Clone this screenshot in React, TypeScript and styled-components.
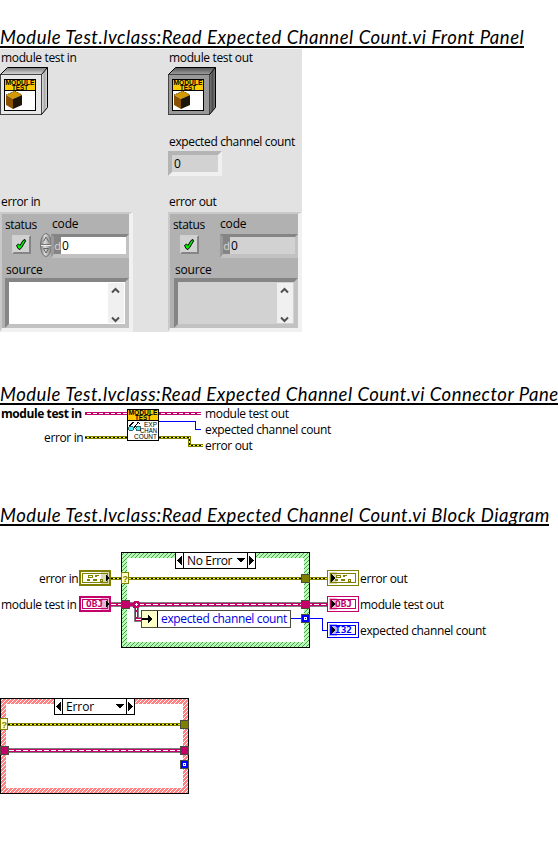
import React from 'react';
import styled, { createGlobalStyle } from 'styled-components';

const Global = createGlobalStyle`
  body { margin: 0; background: #fff; }
  * { box-sizing: border-box; }
`;

const ui = `'Open Sans', 'Noto Sans', sans-serif`;

const Page = styled.main`
  width: 558px;
  height: 844px;
  overflow: hidden;
  display: flex;
  flex-direction: column;
  align-items: flex-start;
  background: #fff;
  color: #000;
`;

const Heading = styled.h1<{ $top: number; $width: number; $spacing: number }>`
  margin: ${p => p.$top}px 0 0;
  width: ${p => p.$width}px;
  height: 22px;
  flex: none;
  overflow: hidden;
  white-space: nowrap;
  border-bottom: 2px solid #000;
  font: italic 400 18.5px/23px Lato, sans-serif;
  letter-spacing: ${p => p.$spacing}px;
`;

const Text = styled.div<{ $bold?: boolean; $spacing?: number }>`
  font: ${p => (p.$bold ? 700 : 400)} 12px/16px ${ui};
  letter-spacing: ${p => p.$spacing ?? -0.35}px;
  white-space: nowrap;
`;

const Panel = styled.section`
  width: 302px;
  height: 283px;
  margin-top: 1px;
  flex: none;
  display: grid;
  grid-template-columns: 168px 134px;
  grid-template-rows: 84px 60px 139px;
  background: #e2e2e2;
`;

const Cell = styled.div`
  display: flex;
  flex-direction: column;
  align-items: flex-start;
  padding-top: 1px;
`;

const Caption = styled(Text)`
  height: 17px;
  padding-left: 1px;
`;

const Numeric = styled.div`
  width: 54px;
  height: 25px;
  padding-left: 2px;
  border: 4px solid;
  border-color: #b4b4b4 #f0f0f0 #f0f0f0 #b4b4b4;
  background: #d2d2d2;
  font: 12px/17px ${ui};
`;

const Cluster = styled.div<{ $live: boolean }>`
  width: ${p => (p.$live ? 133 : 134)}px;
  height: 120px;
  margin-top: 1px;
  border: 4px solid;
  border-color: #c9c9c9 #f1f1f1 #f1f1f1 #c9c9c9;
  border-top-width: 2px;
  border-left-width: 2px;
  background: #b1b1b1;
  display: flex;
  flex-direction: column;
`;

const ClusterRow = styled.div`
  display: flex;
  height: 45px;
`;

const StatusPart = styled.div`
  width: 36px;
  flex: none;
  padding: 3px 0 0 3px;
`;

const StatusLed = styled.div`
  width: 19px;
  height: 19px;
  margin: 2px 0 0 7px;
  border: 2px solid;
  border-color: #d0d0d0 #858585 #858585 #d0d0d0;
  background: #d2d2d2;
  display: flex;
  align-items: center;
  justify-content: center;
`;

const CodePart = styled.div`
  flex: 1;
  padding-top: 2px;
`;

const CodeLabel = styled(Text)`
  padding-left: 14px;
`;

const CodeRow = styled.div`
  display: flex;
  height: 26px;
  align-items: center;
`;

const SpinnerSlot = styled.div<{ $live: boolean }>`
  width: ${p => (p.$live ? 13 : 14)}px;
  height: 24px;
  padding-left: 2px;
  flex: none;
  svg { display: block; }
`;

const CodeField = styled.div<{ $live: boolean }>`
  width: 78px;
  flex: none;
  height: 24px;
  margin-top: 2px;
  border: 3px solid;
  border-color: #858585 #c2c2c2 #c2c2c2 #9a9a9a;
  border-bottom-width: 4px;
  display: flex;
  background: ${p => (p.$live ? '#fff' : '#d2d2d2')};
  font: 12px/18px ${ui};
`;

const Radix = styled.span`
  width: 7px;
  background: #858585;
  color: #d8d8d8;
  text-align: center;
  font-size: 11px;
`;

const Digit = styled.span`
  padding-left: 1px;
`;

const SourcePart = styled.div<{ $live: boolean }>`
  padding-left: ${p => (p.$live ? 3 : 4)}px;
`;

const SourceLabel = styled(Text)`
  padding-left: 1px;
  height: 16px;
  margin-top: 3px;
`;

const SourceBox = styled.div<{ $live: boolean }>`
  width: 124px;
  height: 50px;
  border: 4px solid;
  border-color: #858585 #c2c2c2 #c2c2c2 #858585;
  background: ${p => (p.$live ? '#fff' : '#d2d2d2')};
  display: flex;
  justify-content: flex-end;
  padding: 1px;
`;

const ScrollBar = styled.div`
  width: 16px;
  background: #f0f0f0;
  svg { display: block; }
`;

const Canvas = styled.section<{ $h: number }>`
  position: relative;
  flex: none;
  width: 558px;
  height: ${p => p.$h}px;
`;

const Art = styled.svg`
  position: absolute;
  left: 0;
  top: 0;
`;

const Tag = styled(Text)<{ $x: number; $y: number }>`
  position: absolute;
  left: ${p => p.$x}px;
  top: ${p => p.$y}px;
`;

const FieldTag = styled(Tag)`
  color: #0000e0;
`;

function ModuleBanner() {
  return (
    <>
      <rect x="0.5" y="0.5" width="31" height="31" fill="#fff" stroke="#000" />
      <rect x="1" y="1" width="30" height="10" fill="#ffcb00" />
      <path d="M1 11.5H31" stroke="#000" />
      <g fontFamily="Liberation Sans" fontSize="6.5" fontWeight="700">
        <text x="1.5" y="5.8" textLength="29" lengthAdjust="spacingAndGlyphs">MODULE</text>
        <text x="8" y="11" textLength="16" lengthAdjust="spacingAndGlyphs">TEST</text>
      </g>
    </>
  );
}

function ClassCube({ dark, id }: { dark?: boolean; id: string }) {
  return (
    <svg width="48" height="48" viewBox="0 0 48 48" display="block">
      <defs>
        <linearGradient id={id + 't'} x1="0" y1="0" x2="0" y2="1">
          <stop offset="0" stopColor={dark ? '#505050' : '#777'} />
          <stop offset="1" stopColor={dark ? '#a0a0a0' : '#ddd'} />
        </linearGradient>
        <linearGradient id={id + 's'}>
          <stop offset="0" stopColor={dark ? '#7d7d7d' : '#e8e8e8'} />
          <stop offset="0.5" stopColor={dark ? '#4c4c4c' : '#aaa'} />
          <stop offset="1" stopColor={dark ? '#858585' : '#e0e0e0'} />
        </linearGradient>
      </defs>
      <path d="M0.5 7.5L7.5 0.5H47.5L41.5 7.5Z" fill={`url(#${id}t)`} />
      <path d="M41.5 7.5L47.5 0.5V40.5L41.5 47.5Z" fill={`url(#${id}s)`} />
      <rect x="0.5" y="7.5" width="41" height="40" fill={dark ? '#999' : '#e8e8e8'} stroke="#444" />
      <path d="M0.5 7.5L7.5 0.5H47.5V40.5L41.5 47.5M41.5 7.5L47.5 0.5" fill="none" stroke="#000" />
      <g transform="translate(4 12)">
        <ModuleBanner />
        <path d="M2 16L11 12L18 16L9 20Z" fill="#d29a00" />
        <path d="M2 16L9 20V30L2 26Z" fill="#8a5200" />
        <path d="M9 20L18 16V26L9 30Z" fill="#1d1609" />
        <path d="M2 16L11 12L18 16" fill="none" stroke="#4c3200" strokeDasharray="1 1" />
      </g>
    </svg>
  );
}

function ErrorCluster({ live }: { live: boolean }) {
  return (
    <Cluster $live={live}>
      <ClusterRow>
        <StatusPart>
          <Text>status</Text>
          <StatusLed>
            <svg width="13" height="13" viewBox="0 0 13 13">
              <path d="M1.5 7.5L3.5 6L5 7.5L8 2.5L10 1.5L10.5 3L7 9L5 11.5L3 10.5Z" fill="#00ef00" stroke="#000" />
            </svg>
          </StatusLed>
        </StatusPart>
        <CodePart>
          <CodeLabel $spacing={-0.15}>code</CodeLabel>
          <CodeRow>
            <SpinnerSlot $live={live}>
              {live && (
                <svg width="12" height="24" viewBox="0 0 12 24">
                  <defs>
                    <linearGradient id="spin">
                      <stop offset="0" stopColor="#777" />
                      <stop offset="0.4" stopColor="#ddd" />
                      <stop offset="1" stopColor="#777" />
                    </linearGradient>
                  </defs>
                  <ellipse cx="6" cy="12" rx="5.5" ry="11.5" fill="url(#spin)" stroke="#777" />
                  <path d="M1 11.5H11" stroke="#777" />
                  <path d="M1 12.5H11" stroke="#eee" />
                  <path d="M3.5 8.5L6 4L8.5 8.5M3.5 15.5H8.5L6 20Z" fill="none" stroke="#666" />
                </svg>
              )}
            </SpinnerSlot>
            <CodeField $live={live}>
              <Radix>d</Radix>
              <Digit>0</Digit>
            </CodeField>
          </CodeRow>
        </CodePart>
      </ClusterRow>
      <SourcePart $live={live}>
        <SourceLabel $spacing={-0.2}>source</SourceLabel>
        <SourceBox $live={live}>
          <ScrollBar>
            <svg width="16" height="40" viewBox="0 0 16 40">
              <path d="M4 9.5L7.5 6L11 9.5M4 34.5L7.5 38L11 34.5" fill="none" stroke="#505050" strokeWidth="2" />
            </svg>
          </ScrollBar>
        </SourceBox>
      </SourcePart>
    </Cluster>
  );
}

const OLIVE = '#808000';
const PINK = '#c4006a';
const BLUE = '#0000ff';

function ErrorWire({ d }: { d: string }) {
  return (
    <g fill="none">
      <path d={d} stroke={OLIVE} strokeWidth="3" />
      <path d={d} stroke="#ffff00" />
      <path d={d} stroke="#000" strokeDasharray="2 2" />
    </g>
  );
}

function ClassWire({ d }: { d: string }) {
  return (
    <g fill="none">
      <path d={d} stroke="#808080" strokeWidth="5" />
      <path d={d} stroke={PINK} strokeWidth="3" />
      <path d={d} stroke="#fff" strokeDasharray="5 2" />
    </g>
  );
}

type Kind = 'error' | 'class' | 'int';
const kindColor = { error: OLIVE, class: PINK, int: BLUE };

function Tunnel({ x, y, kind }: { x: number; y: number; kind: Kind }) {
  return (
    <g>
      <rect x={x + 0.5} y={y + 0.5} width="8" height="8" fill={kindColor[kind]} stroke="#4b4b3c" />
      {kind === 'int' && <rect x={x + 3.5} y={y + 3.5} width="2" height="2" fill={BLUE} stroke="#fff" />}
    </g>
  );
}

function CaseSelectorPin({ x, y }: { x: number; y: number }) {
  return (
    <g>
      <rect x={x + 0.5} y={y + 0.5} width="7" height="11" fill="#ffffc8" stroke={OLIVE} />
      <text x={x + 1.5} y={y + 9.5} fontFamily="Liberation Sans" fontSize="9" fontWeight="700" fill={OLIVE}>?</text>
    </g>
  );
}

function Terminal({ x, y, kind, source }: { x: number; y: number; kind: Kind; source?: boolean }) {
  const c = kindColor[kind];
  return (
    <g transform={`translate(${x} ${y})`}>
      <rect x={source ? 1 : 0.5} y={source ? 1 : 0.5} width={source ? 30 : 31} height={source ? 14 : 15} fill="#fff" stroke={c} strokeWidth={source ? 2 : 1} />
      <rect x="3.5" y="3.5" width="25" height="9" fill="#fff" stroke={c} />
      {kind === 'error' ? (
        <g fill="none" stroke={c}>
          <path d="M9.5 5.5H13.5V7.5H9.5ZM17 5.5H20M21.5 9.5H23.5V11.5H21.5Z" />
          <path d="M8 10H11M14 10H18M16 6H18" strokeWidth="2" />
        </g>
      ) : (
        <text x={source ? 7 : 8} y="11" textLength="17" lengthAdjust="spacingAndGlyphs" fontFamily="DejaVu Sans Mono" fontWeight="700" fontSize="8.5" fill={c}>
          {kind === 'class' ? 'OBJ' : 'I32'}
        </text>
      )}
      <rect x={source ? 22 : 2} y="2" width="8" height="12" fill={c} opacity="0.3" />
      <path d={source ? 'M27 5L30 8L27 11Z' : 'M4 4L8 8L4 12Z'} fill="#000" />
    </g>
  );
}

function CaseFrame({ x, y, ok }: { x: number; y: number; ok?: boolean }) {
  const id = ok ? 'hatchOk' : 'hatchErr';
  return (
    <g transform={`translate(${x} ${y})`}>
      <defs>
        <pattern id={id} width="4" height="4" patternUnits="userSpaceOnUse">
          <rect width="4" height="4" fill={ok ? '#b4ffb4' : '#ff8080'} />
          {[0, 1, 2, 3].map(i => (
            <rect key={i} x={i} y={3 - i} width="1" height="1" fill={ok ? '#569656' : '#fff'} />
          ))}
        </pattern>
      </defs>
      <rect width="189" height="96" fill="#000" />
      <rect x="1" y="1" width="187" height="94" fill={`url(#${id})`} />
      <rect x="6" y="6" width="177" height="84" fill="#fff" />
      <rect x="54.5" y="0.5" width="80" height="16" fill="#fff" stroke="#000" />
      <path d="M62.5 0V17M126.5 0V17" stroke="#000" />
      <path d="M61 4V13L56 8.5ZM128 4V13L133 8.5ZM116 6H124L120 10.5Z" />
    </g>
  );
}

export default function App() {
  return (
    <Page>
      <Global />
      <Heading $top={26} $width={524} $spacing={0.53}>Module Test.lvclass:Read Expected Channel Count.vi Front Panel</Heading>
      <Panel>
        <Cell>
          <Caption>module test in</Caption>
          <ClassCube id="cin" />
        </Cell>
        <Cell>
          <Caption>module test out</Caption>
          <ClassCube id="cout" dark />
        </Cell>
        <Cell />
        <Cell>
          <Caption>expected channel count</Caption>
          <Numeric>0</Numeric>
        </Cell>
        <Cell>
          <Caption>error in</Caption>
          <ErrorCluster live />
        </Cell>
        <Cell>
          <Caption>error out</Caption>
          <ErrorCluster live={false} />
        </Cell>
      </Panel>

      <Heading $top={51} $width={558} $spacing={0.5}>Module Test.lvclass:Read Expected Channel Count.vi Connector Pane</Heading>
      <Canvas $h={50}>
        <Art width="558" height="50" viewBox="0 405 558 50" shapeRendering="crispEdges">
          <g fill="none">
            <path d="M85 413.5H127M159 413.5H201" stroke={PINK} strokeWidth="3" />
            <path d="M87 413.5H127M161 413.5H201" stroke="#fff" strokeDasharray="4 2" />
            <path d="M159 421.5H195.5V429.5H201" stroke={BLUE} />
          </g>
          <ErrorWire d="M85 437.5H127" />
          <ErrorWire d="M159 437.5H189.5V445.5H203" />
          <g transform="translate(127 409)">
            <ModuleBanner />
            <circle cx="4" cy="19.5" r="2.5" fill="#5ee" stroke="#366" />
            <circle cx="11.5" cy="19.5" r="2.5" fill="#5ee" stroke="#366" />
            <path d="M2.5 17L6 13.5L7.5 14.5M7 19L11 13.5L13 14.5" fill="none" stroke="#000" />
            <g fontFamily="Liberation Sans" fontSize="6.8">
              <text x="17" y="18" textLength="13" lengthAdjust="spacingAndGlyphs">EXP</text>
              <text x="13" y="24" textLength="17" lengthAdjust="spacingAndGlyphs">CHAN</text>
              <text x="7" y="30" textLength="23" lengthAdjust="spacingAndGlyphs">COUNT</text>
            </g>
          </g>
        </Art>
        <Tag $bold $x={1} $y={1} $spacing={-0.42}>module test in</Tag>
        <Tag $x={44} $y={25}>error in</Tag>
        <Tag $x={205} $y={1}>module test out</Tag>
        <Tag $x={205} $y={17}>expected channel count</Tag>
        <Tag $x={205} $y={33}>error out</Tag>
      </Canvas>

      <Heading $top={49} $width={549} $spacing={0.53}>Module Test.lvclass:Read Expected Channel Count.vi Block Diagram</Heading>
      <Canvas $h={318}>
        <Art width="558" height="318" viewBox="0 526 558 318" shapeRendering="crispEdges">
          <CaseFrame x={121} y={552} ok />
          <ErrorWire d="M111 578.5H327" />
          <ClassWire d="M111 604.5H327" />
          <ClassWire d="M136.5 605V619.5H141" />
          <circle cx="136.5" cy="604.5" r="4" fill={PINK} />
          <path d="M135 604.5H138M136.5 603V606" stroke="#fff" />
          <path d="M291 618.5H322.5V630.5H327" fill="none" stroke={BLUE} />
          <rect x="141.5" y="610.5" width="149" height="17" fill="#fff" stroke="#4b4b3c" />
          <rect x="142" y="611" width="15" height="16" fill="#ffffc8" />
          <path d="M157.5 611V627" stroke="#000" />
          <path d="M142 618H148V615L153 619L148 623V620H142Z" />
          <CaseSelectorPin x={121} y={572} />
          <Tunnel x={121} y={600} kind="class" />
          <Tunnel x={301} y={574} kind="error" />
          <Tunnel x={301} y={600} kind="class" />
          <Tunnel x={301} y={614} kind="int" />
          <Terminal x={79} y={570} kind="error" source />
          <Terminal x={79} y={596} kind="class" source />
          <Terminal x={327} y={570} kind="error" />
          <Terminal x={327} y={596} kind="class" />
          <Terminal x={327} y={622} kind="int" />

          <CaseFrame x={0} y={698} />
          <ErrorWire d="M8 724.5H180" />
          <ClassWire d="M9 750.5H180" />
          <CaseSelectorPin x={0} y={718} />
          <Tunnel x={0} y={746} kind="class" />
          <Tunnel x={180} y={720} kind="error" />
          <Tunnel x={180} y={746} kind="class" />
          <Tunnel x={180} y={760} kind="int" />
        </Art>
        <Tag $x={39} $y={45}>error in</Tag>
        <Tag $x={1} $y={71}>module test in</Tag>
        <Tag $x={187} $y={27}>No Error</Tag>
        <FieldTag $x={161} $y={85}>expected channel count</FieldTag>
        <Tag $x={360} $y={45}>error out</Tag>
        <Tag $x={360} $y={71}>module test out</Tag>
        <Tag $x={360} $y={97}>expected channel count</Tag>
        <Tag $x={66} $y={173} $spacing={-0.1}>Error</Tag>
      </Canvas>
    </Page>
  );
}
